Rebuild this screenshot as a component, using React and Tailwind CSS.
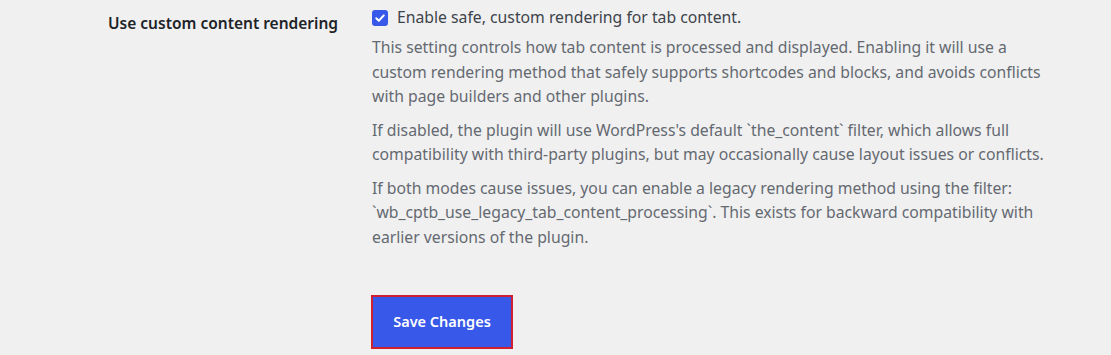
import React from "react";

export default function App() {
  const font = { fontFamily: '"Noto Sans", "Open Sans", sans-serif' };
  return (
    <div className="w-[1111px] h-[355px] bg-[#f0f0f1] overflow-hidden" style={font}>
      <div className="flex pt-[6px]">
        <div className="w-[364px] shrink-0 pl-[108px] pt-[7px] text-[15.5px] font-semibold text-[#1d2327] leading-[20px]">
          Use custom content rendering
        </div>
        <div className="w-[690px]">
          <label className="flex items-center h-[24px]">
            <span className="ml-[8px] w-[16px] h-[16px] rounded-[3px] bg-[#3858e9] flex items-center justify-center">
              <svg width="12" height="12" viewBox="0 0 12 12" fill="none">
                <path d="M2.3 6.3 L4.8 8.7 L9.8 3.4" stroke="white" strokeWidth="2" strokeLinecap="round" strokeLinejoin="round" />
              </svg>
            </span>
            <span className="ml-[9px] text-[15.75px] text-[#3c434a]">Enable safe, custom rendering for tab content.</span>
          </label>
          <div className="pl-[8px] w-[688px] text-[15.75px] leading-[24.5px] text-[#646970]">
            <p className="mt-[5px]">
              This setting controls how tab content is processed and displayed. Enabling it will use a custom rendering method that safely supports shortcodes and blocks, and avoids conflicts with page builders and other plugins.
            </p>
            <p className="mt-[9px]">
              If disabled, the plugin will use WordPress's default `the_content` filter, which allows full compatibility with third-party plugins, but may occasionally cause layout issues or conflicts.
            </p>
            <p className="mt-[9px]">
              If both modes cause issues, you can enable a legacy rendering method using the filter: `wb_cptb_use_legacy_tab_content_processing`. This exists for backward compatibility with earlier versions of the plugin.
            </p>
          </div>
          <div className="mt-[46px] pl-[7px]">
            <button className="w-[142px] h-[54px] border-2 border-[#d0202f] bg-[#3858e9] text-white text-[14.5px] font-semibold">
              Save Changes
            </button>
          </div>
        </div>
      </div>
    </div>
  );
}
